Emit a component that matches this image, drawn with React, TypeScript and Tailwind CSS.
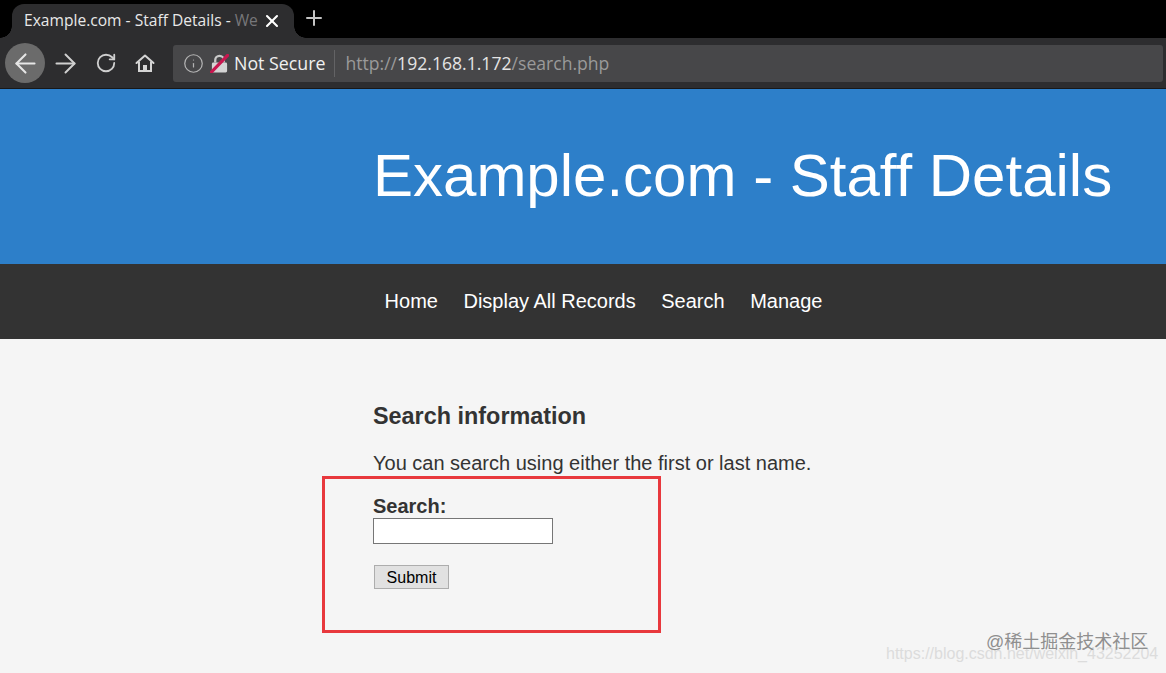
import { ArrowLeft, ArrowRight, Info, Plus, RotateCw, X } from "lucide-react";

const NAV_LINKS = ["Home", "Display All Records", "Search", "Manage"];

function HomeIcon() {
  return (
    <svg viewBox="0 0 20 20" className="w-5 h-5" fill="none" stroke="#d4d4d4" strokeWidth="2">
      <path d="M1.5 10 10 2.5 18.5 10" strokeLinecap="round" strokeLinejoin="round" />
      <path d="M4 8.5V18h12V8.5" />
      <path d="M8 18v-6h4v6" fill="#d4d4d4" stroke="none" />
    </svg>
  );
}

function BrokenLock() {
  return (
    <svg viewBox="0 0 20 20" className="w-[19px] h-[19px] shrink-0">
      <path d="M5.5 9V6.5a4.5 4.5 0 0 1 9 0V9" fill="none" stroke="#c9c9c9" strokeWidth="2.4" />
      <rect x="2" y="9" width="16" height="10.5" rx="1.5" fill="#d4d4d4" />
      <path d="M1.5 19 18.5 1.5" stroke="#c8174f" strokeWidth="3.4" strokeLinecap="round" />
    </svg>
  );
}

function BrowserChrome() {
  return (
    <div className="bg-[#2d2d2f] font-['Open_Sans',sans-serif]">
      <div className="h-[38px] bg-black flex items-end">
        <div className="w-[12px] h-[12px] bg-[radial-gradient(circle_at_0_0,transparent_11.5px,#2d2d2f_12px)]" />
        <div className="w-[282px] h-[34px] bg-[#2d2d2f] rounded-t-[12px] flex items-center pl-[12px] pr-[12px]">
          <span className="flex-1 overflow-hidden whitespace-nowrap text-[15.6px] text-[#e8e8e8]">
            Example.com - Staff Details - <span className="text-[#77777a]">We</span>
          </span>
          <X size={20} strokeWidth={2.5} className="text-white shrink-0" />
        </div>
        <div className="w-[12px] h-[12px] bg-[radial-gradient(circle_at_100%_0,transparent_11.5px,#2d2d2f_12px)]" />
        <Plus size={24} strokeWidth={2} className="-ml-[4px] mb-[8px] text-[#c4c4c4]" />
      </div>
      <div className="h-[51px] flex items-center pl-[5px] border-b border-[#17181a]">
        <div className="w-10 h-10 rounded-full bg-[#6b6b6b] flex items-center justify-center">
          <ArrowLeft size={31} strokeWidth={1.6} className="text-[#e6e6e6]" />
        </div>
        <ArrowRight size={31} strokeWidth={1.5} className="ml-[5px] text-[#cfcfcf]" />
        <RotateCw size={22} strokeWidth={2} className="ml-[14px] text-[#cfcfcf]" />
        <div className="ml-[18px]">
          <HomeIcon />
        </div>
        <div className="ml-[18px] mr-[3px] flex-1 h-[37px] rounded-[3px] bg-[#474749] flex items-center pl-[10px]">
          <Info size={21} strokeWidth={1.4} className="text-[#b4b4b4]" />
          <div className="ml-[6px]">
            <BrokenLock />
          </div>
          <span className="ml-[5px] text-[17.8px] text-[#f0f0f0]">Not Secure</span>
          <div className="ml-[9px] w-px h-[27px] bg-[#636365]" />
          <span className="ml-[10px] text-[17.6px] text-[#9a9a9a]">
            http://<span className="text-[#e4e4e4]">192.168.1.172</span>/search.php
          </span>
        </div>
      </div>
    </div>
  );
}

export default function App() {
  return (
    <div className="relative h-[673px] overflow-hidden bg-[#f5f5f5] font-['Liberation_Sans',sans-serif]">
      <BrowserChrome />
      <header className="h-[175px] bg-[#2d7fc9] pl-[373px] pt-[52px]">
        <h1 className="text-[60px] leading-[70px] text-white whitespace-nowrap">Example.com - Staff Details</h1>
      </header>
      <nav className="h-[75px] bg-[#333333] flex items-center justify-center gap-[25.5px] pl-[41px] pb-[2px] text-[20px] text-white">
        {NAV_LINKS.map((link) => (
          <a key={link}>{link}</a>
        ))}
      </nav>
      <main className="pl-[373px] pt-[64px] text-[#333333]">
        <h2 className="text-[23.4px] leading-[26px] font-bold">Search information</h2>
        <p className="mt-[22px] text-[20px] leading-[24px]">You can search using either the first or last name.</p>
        <form className="mt-[19px]">
          <label className="block text-[20px] leading-[24px] font-bold">Search:</label>
          <input type="text" className="block w-[180px] h-[26px] bg-white border border-[#767676]" />
          <button
            type="button"
            className="block mt-[21px] ml-[1px] w-[75px] h-[24px] bg-[#e1e1e1] border border-[#adadad] text-[16px] text-black"
          >
            Submit
          </button>
        </form>
      </main>
      {/* annotation + watermarks sit on top of the screenshot */}
      <div className="absolute left-[322px] top-[476px] w-[339px] h-[157px] border-[3px] border-[#e8383d]" />
      <div className="absolute left-[886px] top-[645px] text-[16px] leading-[18px] text-[#dcdcdc] whitespace-nowrap">
        https://blog.csdn.net/weixin_43252204
      </div>
      <div className="absolute left-[986px] top-[630px] text-[18px] leading-[24px] text-[#8f8f8f] whitespace-nowrap font-['Liberation_Sans','Noto_Sans_CJK_SC',sans-serif]">
        @稀土掘金技术社区
      </div>
    </div>
  );
}
